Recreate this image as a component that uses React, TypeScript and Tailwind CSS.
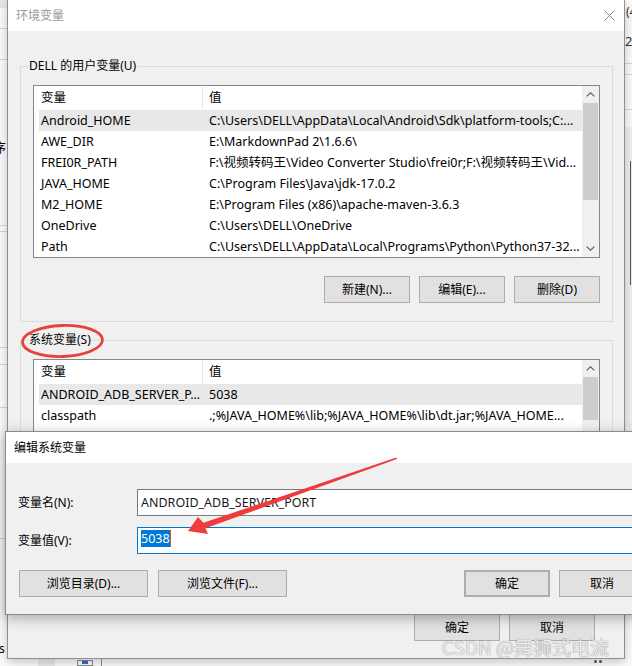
import type { ReactNode } from "react";

const userVars: [string, string][] = [
  ["Android_HOME", "C:\\Users\\DELL\\AppData\\Local\\Android\\Sdk\\platform-tools;C:..."],
  ["AWE_DIR", "E:\\MarkdownPad 2\\1.6.6\\"],
  ["FREI0R_PATH", "F:\\视频转码王\\Video Converter Studio\\frei0r;F:\\视频转码王\\Vid..."],
  ["JAVA_HOME", "C:\\Program Files\\Java\\jdk-17.0.2"],
  ["M2_HOME", "E:\\Program Files (x86)\\apache-maven-3.6.3"],
  ["OneDrive", "C:\\Users\\DELL\\OneDrive"],
  ["Path", "C:\\Users\\DELL\\AppData\\Local\\Programs\\Python\\Python37-32..."],
];

const sysVars: [string, string][] = [
  ["ANDROID_ADB_SERVER_P...", "5038"],
  ["classpath", ".;%JAVA_HOME%\\lib;%JAVA_HOME%\\lib\\dt.jar;%JAVA_HOME..."],
  ["ComSpec", "C:\\WINDOWS\\system32\\cmd.exe"],
  ["DriverData", "C:\\Windows\\System32\\Drivers\\DriverData"],
  ["JAVA_HOME", "C:\\Program Files\\Java\\jdk-17.0.2"],
  ["NUMBER_OF_PROCESSORS", "8"],
  ["OS", "Windows_NT"],
];

function Chevron({ down }: { down?: boolean }) {
  return (
    <svg width="9" height="5" viewBox="0 0 9 5" className={down ? "rotate-180" : ""}>
      <path d="M0.6 4.4 L4.5 0.8 L8.4 4.4" fill="none" stroke="#606060" strokeWidth="1.2" />
    </svg>
  );
}

function ScrollBar({ thumb }: { thumb: string }) {
  return (
    <div className="flex w-[17px] shrink-0 flex-col bg-[#f0f0f0]">
      <div className="flex h-[17px] shrink-0 items-center justify-center">
        <Chevron />
      </div>
      <div className="flex-1 px-[1px]">
        <div className={`bg-[#cdcdcd] ${thumb}`} />
      </div>
      <div className="flex h-[17px] shrink-0 items-center justify-center">
        <Chevron down />
      </div>
    </div>
  );
}

function VarList({ rows, thumb }: { rows: [string, string][]; thumb: string }) {
  return (
    <div className="flex h-[173px] border border-[#828790] bg-white">
      <div className="flex min-w-0 flex-1 flex-col overflow-hidden pl-[5px] text-[12.5px]">
        <div className="flex h-[24px] shrink-0">
          <div className="flex w-[163px] items-center pl-[2px]">变量</div>
          <div className="my-[1px] flex items-center border-l border-[#e5e5e5] pl-[6px]">值</div>
        </div>
        {rows.map(([name, value], i) => (
          <div
            key={name + i}
            className={`flex h-[21px] shrink-0 items-center whitespace-nowrap ${i === 0 ? "bg-[#e8e8e8]" : ""}`}
          >
            <div className="w-[163px] shrink-0 overflow-hidden pl-[2px]">{name}</div>
            <div className="overflow-hidden pl-[7px]">{value}</div>
          </div>
        ))}
      </div>
      <ScrollBar thumb={thumb} />
    </div>
  );
}

function Btn({ children, className = "" }: { children: ReactNode; className?: string }) {
  return (
    <button
      className={`flex h-[27px] shrink-0 items-center justify-center border border-[#adadad] bg-[#e1e1e1] text-black ${className}`}
    >
      {children}
    </button>
  );
}

function Group({ label, rows, thumb, className = "" }: { label: string; rows: [string, string][]; thumb: string; className?: string }) {
  return (
    <fieldset className={`border border-[#dcdcdc] ${className}`}>
      <legend className="ml-[7px] px-[1px] leading-[16px]">{label}</legend>
      <div className="px-[12px] pb-[18px] pt-[11px]">
        <VarList rows={rows} thumb={thumb} />
        <div className="mt-[18px] flex justify-end gap-[9px]">
          <Btn className="w-[86px]">新建(N)...</Btn>
          <Btn className="w-[86px]">编辑(E)...</Btn>
          <Btn className="w-[86px]">删除(D)</Btn>
        </div>
      </div>
    </fieldset>
  );
}

function MainWindow() {
  return (
    <div className="absolute left-[7px] top-0 flex h-[659px] w-[618px] flex-col border-x border-b border-[#8f8f8f] bg-[#f0f0f0] shadow-[0_3px_10px_rgba(0,0,0,0.22)]">
      <div className="flex h-[31px] shrink-0 items-center justify-between bg-white pl-[8px] pr-[9px]">
        <span className="text-[#9a9a9a]">环境变量</span>
        <svg width="11" height="11" viewBox="0 0 11 11">
          <path d="M0.5 0.5 L10.5 10.5 M10.5 0.5 L0.5 10.5" stroke="#8a8a8a" strokeWidth="1" />
        </svg>
      </div>
      <div className="flex flex-1 flex-col pl-[12px] pr-[11px]">
        <Group label="DELL 的用户变量(U)" rows={userVars} thumb="h-[97px]" className="mt-[27px]" />
        <Group label="系统变量(S)" rows={sysVars} thumb="h-[43px]" className="mt-[10px]" />
        <div className="mt-auto flex justify-end gap-[9px] pb-[17px] pr-[18px]">
          <Btn className="w-[86px]">确定</Btn>
          <Btn className="w-[86px]">取消</Btn>
        </div>
      </div>
    </div>
  );
}

function EditDialog() {
  return (
    <div className="absolute left-[5px] top-[431px] flex h-[184px] w-[653px] flex-col border border-[#8a8a8a] bg-[#f0f0f0] shadow-[0_3px_12px_rgba(0,0,0,0.3)]">
      <div className="flex h-[31px] shrink-0 items-center bg-white pl-[8px]">编辑系统变量</div>
      <div className="flex flex-col px-[12px] pt-[26px]">
        <div className="flex items-center">
          <span className="w-[119px] shrink-0">变量名(N):</span>
          <div className="flex h-[27px] flex-1 items-center border border-[#7a7a7a] bg-white pl-[3px] text-[12.5px] text-[#1a1a1a]">
            ANDROID_ADB_SERVER_PORT
          </div>
        </div>
        <div className="mt-[11px] flex items-center">
          <span className="w-[119px] shrink-0">变量值(V):</span>
          <div className="flex h-[27px] flex-1 items-start border border-[#0078d7] bg-white pl-[3px] pt-[2px] text-[12.5px]">
            <span className="flex h-[17px] items-center bg-[#0078d7] text-white">5038</span>
            <span className="h-[17px] w-[1px] bg-[#c0601c]" />
          </div>
        </div>
        <div className="mt-[16px] flex justify-between pl-[1px]">
          <div className="flex gap-[10px]">
            <Btn className="w-[129px]">浏览目录(D)...</Btn>
            <Btn className="w-[129px]">浏览文件(F)...</Btn>
          </div>
          <div className="flex gap-[9px]">
            <Btn className="w-[86px] border-2 border-[#0078d7]">确定</Btn>
            <Btn className="w-[86px]">取消</Btn>
          </div>
        </div>
      </div>
    </div>
  );
}

function Backdrop() {
  return (
    <>
      {/* window behind, left edge */}
      <div className="absolute left-0 top-0 h-[8px] w-[7px] bg-[#e6e6e6]" />
      <div className="absolute left-0 top-[28px] h-[1px] w-[7px] bg-[#d6d6d6]" />
      <div className="absolute left-0 top-[59px] h-[1px] w-[7px] bg-[#d6d6d6]" />
      <div className="absolute left-[-7px] top-[139px] text-[13px] leading-[16px]">序</div>
      <div className="absolute left-0 top-[225px] h-[1px] w-[7px] bg-[#d6d6d6]" />
      <div className="absolute left-0 top-[231px] h-[1px] w-[7px] bg-[#d6d6d6]" />
      <div className="absolute left-0 top-[347px] h-[1px] w-[7px] bg-[#d6d6d6]" />
      <div className="absolute left-0 top-[364px] h-[1px] w-[7px] bg-[#d6d6d6]" />
      <div className="absolute left-0 top-[407px] h-[1px] w-[7px] bg-[#d6d6d6]" />
      <div className="absolute left-0 top-[538px] h-[1px] w-[7px] bg-[#d6d6d6]" />
      <div className="absolute left-[-1px] top-[641px] text-[12px] leading-[16px]">s</div>
      {/* window behind, right edge */}
      <div className="absolute left-[626px] top-[4px] text-[12px] leading-[16px] text-[#333]">(4</div>
      <div className="absolute left-[625px] top-[33px] text-[13px] leading-[16px] text-[#333]">2</div>
      <div className="absolute left-[625px] top-[63px] h-[1px] w-[7px] bg-[#d6d6d6]" />
      <div className="absolute left-[625px] top-[74px] h-[1px] w-[7px] bg-[#d6d6d6]" />
      <div className="absolute left-[625px] top-[109px] h-[1px] w-[7px] bg-[#d6d6d6]" />
      <div className="absolute left-[625px] top-[127px] h-[300px] w-[7px] bg-[#f0f0f0]" />
      <div className="absolute left-[630px] top-[161px] h-[124px] w-[1px] bg-[#555]" />
      {/* strip below the main window */}
      <div className="absolute left-[38px] top-[659px] h-[7px] w-[17px] bg-[#e9e9e9]" />
      <div className="absolute left-[77px] top-[660px] h-[6px] w-[16px] border border-[#8a8a8a]">
        <div className="ml-[4px] h-[3px] w-[6px] bg-[#2a6fd0]" />
      </div>
      <div className="absolute left-[101px] top-[659px] h-[7px] w-[1px] bg-[#8a8a8a]" />
      <div className="absolute left-[594px] top-[660px] flex gap-[2px]">
        <span className="h-[3px] w-[3px] rounded-full bg-[#555]" />
        <span className="h-[3px] w-[3px] rounded-full bg-[#555]" />
      </div>
    </>
  );
}

export default function App() {
  return (
    <div className="relative h-[666px] w-[632px] overflow-hidden bg-[#fbfbfb] font-['Noto_Sans','Noto_Sans_CJK_SC',sans-serif] text-[12px] leading-[16px] text-black">
      <Backdrop />
      <MainWindow />
      <EditDialog />

      {/* annotations drawn over the screenshot */}
      <svg className="pointer-events-none absolute left-0 top-0" width="632" height="666" viewBox="0 0 632 666">
        <ellipse cx="62.5" cy="341" rx="40" ry="15.5" fill="none" stroke="#e8423c" strokeWidth="2.8" transform="rotate(-2 62.5 341)" />
        <polygon
          points="188,531 198,517 203.5,522.7 396.3,457.6 396.9,458.9 205.5,528.3 208,534"
          fill="#ee3b3b"
        />
      </svg>

      <div className="pointer-events-none absolute left-[442px] top-[635px] whitespace-nowrap font-['Noto_Sans_CJK_SC',sans-serif] text-[19px] leading-[24px] text-[#ececec] [text-shadow:0_0_1px_rgba(0,0,0,0.3),0_0_1px_rgba(0,0,0,0.3)]">
        CSDN @舞狮式电流
      </div>
    </div>
  );
}
